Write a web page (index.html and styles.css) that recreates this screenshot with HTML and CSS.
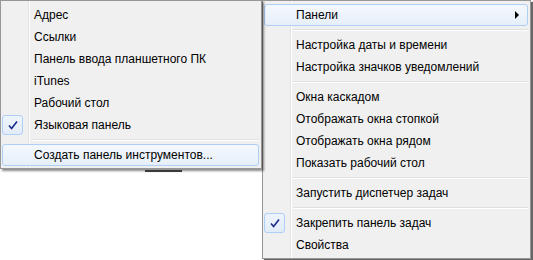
FILE: index.html
```html
<!DOCTYPE html>
<html lang="ru">

<head>
	<meta charset="UTF-8">
	<title>Панели</title>
	<link rel="stylesheet" href="styles.css">
</head>

<body>
	<main id="desk">
		<div id="left">
			<div class="menu" id="toolbars">
				<div class="item"><span class="mark"></span><span class="label">Адрес</span></div>
				<div class="item"><span class="mark"></span><span class="label">Ссылки</span></div>
				<div class="item"><span class="mark"></span><span class="label">Панель ввода планшетного ПК</span></div>
				<div class="item"><span class="mark"></span><span class="label">iTunes</span></div>
				<div class="item"><span class="mark"></span><span class="label">Рабочий стол</span></div>
				<div class="item"><span class="mark"><span class="check"><svg width="12" height="12" viewBox="0 0 12 12"><path d="M2 6.5 L4.6 9.5 L10 2.5" fill="none" stroke="#1a2a8a" stroke-width="1.6"/></svg></span></span><span class="label">Языковая панель</span></div>
				<div class="sep"></div>
				<div class="item hot"><span class="mark"></span><span class="label">Создать панель инструментов...</span></div>
			</div>
			<div class="behind"></div>
		</div>
		<div class="menu" id="taskbar">
			<div class="item hot"><span class="mark"></span><span class="label">Панели</span><span class="arrow"></span></div>
			<div class="sep"></div>
			<div class="item"><span class="mark"></span><span class="label">Настройка даты и времени</span></div>
			<div class="item"><span class="mark"></span><span class="label">Настройка значков уведомлений</span></div>
			<div class="sep"></div>
			<div class="item"><span class="mark"></span><span class="label">Окна каскадом</span></div>
			<div class="item"><span class="mark"></span><span class="label">Отображать окна стопкой</span></div>
			<div class="item"><span class="mark"></span><span class="label">Отображать окна рядом</span></div>
			<div class="item"><span class="mark"></span><span class="label">Показать рабочий стол</span></div>
			<div class="sep"></div>
			<div class="item"><span class="mark"></span><span class="label">Запустить диспетчер задач</span></div>
			<div class="sep"></div>
			<div class="item"><span class="mark"><span class="check"><svg width="12" height="12" viewBox="0 0 12 12"><path d="M2 6.5 L4.6 9.5 L10 2.5" fill="none" stroke="#1a2a8a" stroke-width="1.6"/></svg></span></span><span class="label">Закрепить панель задач</span></div>
			<div class="item"><span class="mark"></span><span class="label">Свойства</span></div>
		</div>
	</main>
</body>

</html>
```

FILE: styles.css
```css
* {
	margin: 0;
	padding: 0;
	box-sizing: border-box;
}

body {
	background-color: white;
	font-family: 'Liberation Sans', Arial, sans-serif;
	font-size: 12px;
	color: black;
	width: 533px;
	height: 260px;
	overflow: hidden;
}

#desk {
	display: flex;
	align-items: flex-start;
}

#left {
	width: 262px;
	position: relative;
	z-index: 1;
}

.menu {
	background-color: #f0f0f0;
	background-image: linear-gradient(to right, transparent 27px, #e2e3e3 27px, #e2e3e3 28px, #fff 28px, #fff 29px, transparent 29px);
	border: 1px solid #979797;
	padding: 3px 2px 2px 1px;
}

#toolbars {
	width: 262px;
	box-shadow: 2px 2px 2px rgba(0, 0, 0, 0.45);
}

.behind {
	margin: 1px 0 0 145px;
	width: 37px;
	height: 2px;
	background-color: #3a3a3a;
}

#taskbar {
	width: 269px;
	height: 259px;
	box-shadow: 2px 2px 1px rgba(0, 0, 0, 0.6);
}

.item {
	display: flex;
	align-items: center;
	height: 22px;
	border: 1px solid transparent;
	border-radius: 3px;
}

.item.hot {
	border-color: #aecff7;
	background-image: linear-gradient(#f4f8fd, #e6eff9);
}

.mark {
	width: 26px;
	align-self: stretch;
	display: flex;
	align-items: center;
}

.check {
	width: 21px;
	height: 20px;
	margin-left: -1px;
	border: 1px solid #aecff7;
	border-radius: 3px;
	background-image: linear-gradient(#eef4fc, #e2ecf8);
	display: flex;
	align-items: center;
	justify-content: center;
}

.label {
	flex: 1;
	padding-left: 5px;
	white-space: nowrap;
}

.arrow {
	width: 0;
	height: 0;
	border-top: 4px solid transparent;
	border-bottom: 4px solid transparent;
	border-left: 4px solid #000;
	margin-right: 8px;
}

.sep {
	height: 8px;
	margin-left: 29px;
	padding-top: 3px;
}

.sep::before {
	content: "";
	display: block;
	height: 1px;
	background-color: #e0e0e0;
	border-bottom: 1px solid #fff;
	box-sizing: content-box;
}
```
